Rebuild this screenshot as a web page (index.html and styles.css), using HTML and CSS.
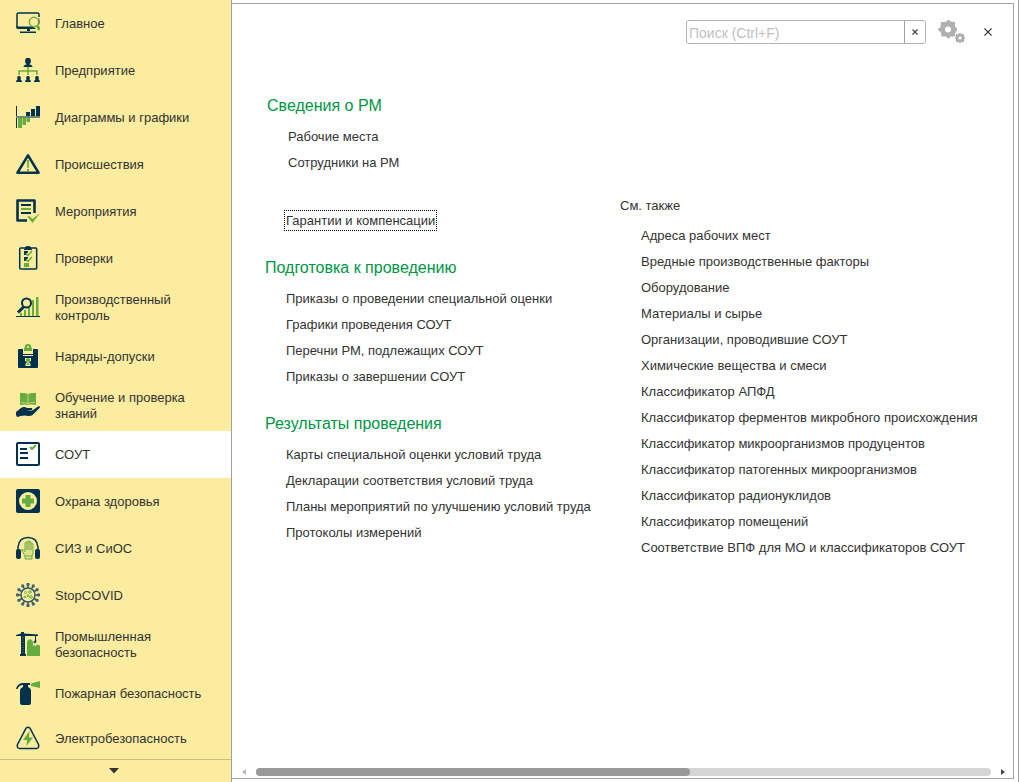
FILE: index.html
```html
<!DOCTYPE html>
<html lang="ru">
<head>
<meta charset="utf-8">
<title>СОУТ</title>
<link rel="stylesheet" href="styles.css">
</head>
<body>
<div class="app">
  <nav class="sidebar" aria-label="Разделы">
    <ul class="sections">
      <li><a class="section" href="#"><svg class="icon" viewBox="0 0 24 24"><path class="ns" d="M23 6V3.500Q23 2 21.500 2h-19Q1 2 1 3.500V16"/><path class="n" d="M0 15.500h17l3 2.500H2q-2 0-2-2zM11 18h3v2h-3zM4 20.500h16V22H4z"/><circle class="gs" cx="18" cy="11" r="4.700"/><path class="gs w3" d="M21.500 15l2 4"/><path d="M22.500 7.500q1.500 3 0 6" fill="none" stroke="#6d8878" stroke-width="1.500"/></svg><span>Главное</span></a></li>
      <li><a class="section" href="#"><svg class="icon" viewBox="0 0 24 24"><path class="gs" d="M12 9v8M3 17v-4h18v4"/><g class="n"><ellipse cx="12" cy="3" rx="2.900" ry="3.300"/><path d="M7.500 9q0-2 3-2.500V5h3v1.500q3 .5 3 2.500zM0 24q0-2 1.500-2.500-1.200-3.500 1.500-3.500t1.500 3.500Q6 22 6 24zM9 24q0-2 1.500-2.500-1.200-3.500 1.500-3.500t1.500 3.500Q15 22 15 24zM18 24q0-2 1.500-2.500-1.200-3.500 1.500-3.500t1.500 3.500Q24 22 24 24z"/></g></svg><span>Предприятие</span></a></li>
      <li><a class="section" href="#"><svg class="icon" viewBox="0 0 24 24"><path class="n" d="M0 1h1v22H0zM10 7h4v4h-4zM15 4h4v7h-4zM20 1h4v10h-4z"/><path fill="#6d8878" d="M0 11h24v2H0z"/><path class="g" d="M2 13h4v10H2zM6.500 13h3.500v7H6.500zM10.500 13h3.500v4h-3.500z"/></svg><span>Диаграммы и графики</span></a></li>
      <li><a class="section" href="#"><svg class="icon" viewBox="0 0 24 24"><path class="ns heavy" d="M12 3.300L22.500 20.700h-21z"/><path class="g" d="M11 8h2l-.3 8h-1.400zM11 17h2v2h-2z"/></svg><span>Происшествия</span></a></li>
      <li><a class="section" href="#"><svg class="icon" viewBox="0 0 24 24"><path class="ns heavy" d="M18.500 14V1.500h-17v20H11"/><path class="ns w2" d="M5 6h10M5 14h10"/><path class="gs w2" d="M5 10h10"/><path class="g" d="M11 17l3 .5 2.500 2.500 7.500-6-7.500 10z"/></svg><span>Мероприятия</span></a></li>
      <li><a class="section" href="#"><svg class="icon" viewBox="0 0 24 24"><rect class="ns" x="3.700" y="2" width="17" height="21" rx="1"/><path class="n" d="M9 1q3-2 6 0v2h1v1H8V3h1zM8 5h4v1L10 9H8zM8 11h4v1l-2 3H8z"/><path class="gs" d="M9.500 7.500l2.500 2L16 5M9.500 13.500l2.500 2 4-4.500"/><path class="g" d="M8 17h5v4H8z"/></svg><span>Проверки</span></a></li>
      <li><a class="section" href="#"><svg class="icon" viewBox="0 0 24 24"><path class="g" d="M4 18h2v3H4zM8 15h2v6H8zM12 13h2v8h-2zM16 5h2v16h-2zM20 2h2.500v19H20z"/><circle cx="10.500" cy="8" r="4.500" fill="#fbec9f" stroke="#00324d" stroke-width="2"/><path class="ns w3" d="M7.500 12L2 17.500"/><path class="n" d="M0 21h24v1H0z"/></svg><span>Производственный контроль</span></a></li>
      <li><a class="section" href="#"><svg class="icon" viewBox="0 0 24 24"><path class="n" d="M2 6q0-1 1-1h4v5h10V5h4q1 0 1 1v17q0 1-1 1H3q-1 0-1-1z"/><path fill="#fbec9f" d="M7 11h10v1H7zM9.500 22h5v-2l-1.500-2 2-1v-3H9v3l2 1-1.500 2z"/><path class="g" d="M8 7V4q1 0 1-2 0-2 3-2t3 2q0 2 1 2v3zM10 15q2-2 4 0v2l-1.500 1.500h-1L10 17zM10.500 20l1.500-1 1.500 1v1h-3z"/><circle cx="12" cy="3" r="1" fill="#fbec9f"/></svg><span>Наряды-допуски</span></a></li>
      <li><a class="section" href="#"><svg class="icon" viewBox="0 0 24 24"><path class="g" d="M4 0q5-.5 8 1 3-1.500 8-1v12q-5-1-8 0-3-1-8 0z"/><path d="M12 1v10M5 9.500q4-.5 7 1.500 3-2 7-1.500" fill="none" stroke="#d6da88" stroke-width=".8"/><path class="n" d="M0 19l5-4q3-2 6 0h5q1 2-2 2.500h-3q3 1 6-.5l5-3.500q3-1 1.500 1.500l-7 7q-2 1.500-8 .5-4 0-7 1.500-2-1-1.500-5z"/></svg><span>Обучение и проверка знаний</span></a></li>
      <li><a class="section selected" href="#" aria-current="page"><svg class="icon" viewBox="0 0 24 24"><rect class="ns w2" x="1" y="1" width="22" height="22" rx="1"/><path class="n" d="M4 6h7v2H4zM4 10h8v2H4zM4 15h8v2H4z"/><path class="gs w2" d="M14 5l2 2 4-4"/></svg><span>СОУТ</span></a></li>
      <li><a class="section" href="#"><svg class="icon" viewBox="0 0 24 24"><rect class="n" width="24" height="24" rx="2"/><circle cx="12" cy="12" r="9" fill="#fbec9f"/><path class="g" d="M9.500 6h5v3.500H18v5h-3.500V18h-5v-3.500H6v-5h3.500z"/></svg><span>Охрана здоровья</span></a></li>
      <li><a class="section" href="#"><svg class="icon" viewBox="0 0 24 24"><path class="ns" d="M2 14V11Q3 1.500 12 1.500T22 11v3"/><rect class="n" y="13" width="5" height="10" rx="2"/><rect class="n" x="19" y="13" width="5" height="10" rx="2"/><path d="M9 23v-3L5.500 14q0-2 3.500 1.500V7q1-1.500 2 0V5.500q1-1.500 2 0V6q1-1.500 2 0v2q2-1.500 2 0v9l-1 3v3zM11 7v7M13 6v8M15 8v6M9 20h7" fill="#e3df90" stroke="#67ac3f" stroke-width="1"/></svg><span>СИЗ и СиОС</span></a></li>
      <li><a class="section" href="#"><svg class="icon" viewBox="0 0 24 24"><g fill="none" stroke="#36596a" stroke-width="1.500"><circle cx="12" cy="12" r="7"/><path d="M12 5V2M15.500 6L17 3.300M18 8.500l2.700-1.500M19 12h3M18 15.500l2.700 1.500M15.500 18l1.500 2.700M12 19v3M8.500 18L7 20.700M6 15.500L3.300 17M5 12H2M6 8.500L3.300 7M8.500 6L7 3.300"/></g><g fill="none" stroke="#36596a" stroke-width="1.300"><circle cx="12" cy="1.500" r="1"/><circle cx="17.300" cy="2.900" r="1"/><circle cx="21.100" cy="6.700" r="1"/><circle cx="22.500" cy="12" r="1"/><circle cx="21.100" cy="17.300" r="1"/><circle cx="17.300" cy="21.100" r="1"/><circle cx="12" cy="22.500" r="1"/><circle cx="6.700" cy="21.100" r="1"/><circle cx="2.900" cy="17.300" r="1"/><circle cx="1.500" cy="12" r="1"/><circle cx="2.900" cy="6.700" r="1"/><circle cx="6.700" cy="2.900" r="1"/></g><g fill="none" stroke="#67ac3f" stroke-width="1"><circle cx="9.500" cy="9.500" r="1"/><circle cx="14" cy="9" r="1.300"/><circle cx="12" cy="12.500" r="1"/><circle cx="9" cy="14" r="1"/><circle cx="15" cy="14" r="1.300"/></g></svg><span>StopCOVID</span></a></li>
      <li><a class="section" href="#"><svg class="icon" viewBox="0 0 24 24"><path class="n" d="M0 3l5-1.500V0h3v1.500L22 2.500V4h-2v4h-1V4H9v18h1v2H4v-2h1V4H0z"/><path d="M7 5v17" stroke="#6d8878" stroke-dasharray="1 1.500"/><path class="ns" d="M19.500 8v2q-1 1-1.500-.5"/><path class="g" d="M11 24V10l1-2q2-1.500 4 0l1 2v4q2-2 2.500 1v-1q2.500-3 4.500 0v10z"/></svg><span>Промышленная безопасность</span></a></li>
      <li><a class="section" href="#"><svg class="icon" viewBox="0 0 24 24"><path class="n" d="M0 8q1-5 6-6h8v2h-2v2q3 1 3 4v12q0 2-2 2H6q-2 0-2-2V10q0-3 3-4V4Q3 4 1.500 8z"/><path class="g" d="M15 2.500L24 0v7l-9-2z"/></svg><span>Пожарная безопасность</span></a></li>
      <li><a class="section" href="#"><svg class="icon" viewBox="0 0 24 24"><path class="ns" d="M10 2.200q2-2 4 0l8.500 16.300q1 3.500-2 4h-17q-3-.5-2-4z"/><path class="g" d="M13.500 5L7 14h4l-.5 6 6.500-8.500h-4z"/></svg><span>Электробезопасность</span></a></li>
    </ul>
    <button class="more" type="button" aria-label="Ещё"><svg width="10" height="6" viewBox="0 0 10 6"><path d="M0 0h10L5 5.500z" fill="#333"/></svg></button>
  </nav>

  <div class="workspace">
    <main class="panel">
      <header class="toolbar">
        <div class="search">
          <input type="text" placeholder="Поиск (Ctrl+F)" aria-label="Поиск">
          <button type="button" aria-label="Очистить"><svg width="6" height="6" viewBox="0 0 6 6"><path d="M.5.5l5 5M5.500.5l-5 5" stroke="#444" stroke-width="1.200"/></svg></button>
        </div>
        <button class="settings" type="button" aria-label="Настройки"><svg width="27" height="24" viewBox="0 0 27 24"><path fill="#b0b0b0" fill-rule="evenodd" d="M7 2l1.500-.5L9.500 0h2l1 1.500L17 2v4.500l2 2v2l-1.500 1.500-.5 4.500h-4.500L11 18.500H9.500L8 16.500H3.500L3 12.500 0 10V9l2.500-2L3 2zM10 6.500a3 3 0 1 0 0 6 3 3 0 1 0 0-6zM20.500 14l1-1h1l1 1H26v2.500l1 1v1l-1 1V22h-2.500l-1 1h-1l-1-1H18v-2.500l-1-1v-1l1-1V14zM22 16.500a1.500 1.500 0 1 0 0 3 1.500 1.500 0 1 0 0-3z"/></svg></button>
        <button class="close" type="button" aria-label="Закрыть"><svg width="8" height="8" viewBox="0 0 8 8"><path d="M.4.4l7.200 7.200M7.600.4L.4 7.600" stroke="#333" stroke-width="1.200"/></svg></button>
      </header>

      <div class="columns">
        <div class="commands">
          <section class="group first">
            <h2>Сведения о РМ</h2>
            <ul class="links">
              <li><a href="#">Рабочие места</a></li>
              <li><a href="#">Сотрудники на РМ</a></li>
            </ul>
          </section>
          <ul class="links single">
            <li><a class="focused" href="#">Гарантии и компенсации</a></li>
          </ul>
          <section class="group">
            <h2>Подготовка к проведению</h2>
            <ul class="links">
              <li><a href="#">Приказы о проведении специальной оценки</a></li>
              <li><a href="#">Графики проведения СОУТ</a></li>
              <li><a href="#">Перечни РМ, подлежащих СОУТ</a></li>
              <li><a href="#">Приказы о завершении СОУТ</a></li>
            </ul>
          </section>
          <section class="group">
            <h2>Результаты проведения</h2>
            <ul class="links">
              <li><a href="#">Карты специальной оценки условий труда</a></li>
              <li><a href="#">Декларации соответствия условий труда</a></li>
              <li><a href="#">Планы мероприятий по улучшению условий труда</a></li>
              <li><a href="#">Протоколы измерений</a></li>
            </ul>
          </section>
        </div>
        <section class="see-also">
          <h3>См. также</h3>
          <ul class="links">
            <li><a href="#">Адреса рабочих мест</a></li>
            <li><a href="#">Вредные производственные факторы</a></li>
            <li><a href="#">Оборудование</a></li>
            <li><a href="#">Материалы и сырье</a></li>
            <li><a href="#">Организации, проводившие СОУТ</a></li>
            <li><a href="#">Химические вещества и смеси</a></li>
            <li><a href="#">Классификатор АПФД</a></li>
            <li><a href="#">Классификатор ферментов микробного происхождения</a></li>
            <li><a href="#">Классификатор микроорганизмов продуцентов</a></li>
            <li><a href="#">Классификатор патогенных микроорганизмов</a></li>
            <li><a href="#">Классификатор радионуклидов</a></li>
            <li><a href="#">Классификатор помещений</a></li>
            <li><a href="#">Соответствие ВПФ для МО и классификаторов СОУТ</a></li>
          </ul>
        </section>
      </div>

      <div class="scrollbar">
        <svg width="4" height="6" viewBox="0 0 4 6"><path d="M4 0v6L0 3z" fill="#b8b8b8"/></svg>
        <div class="track"><div class="thumb"></div></div>
        <svg width="4" height="6" viewBox="0 0 4 6"><path d="M0 0v6l4-3z" fill="#444"/></svg>
      </div>
    </main>
  </div>
</div>
</body>
</html>
```
FILE: styles.css
```css
* { box-sizing: border-box; }

body {
  margin: 0;
  background: #fff;
  color: #333;
  font: 13px/16px "Liberation Sans", Arial, sans-serif;
}

ul, h2, h3 { margin: 0; padding: 0; }
ul { list-style: none; }
a { color: inherit; text-decoration: none; }

button {
  display: flex;
  align-items: center;
  justify-content: center;
  padding: 0;
  border: 0;
  background: none;
}

.app { display: flex; height: 100vh; }

/* Sections list */
.sidebar {
  display: flex;
  flex-direction: column;
  flex: 0 0 232px;
  border-right: 1px solid #a0a0a0;
  background: #fbec9f;
}

.sections { flex: 1; min-height: 0; overflow: hidden; }

.section {
  display: flex;
  align-items: center;
  gap: 15px;
  min-height: 47px;
  padding: 8px 24px 9px 16px;
}

.section span { padding-top: 2px; }
.sections li:last-child .section { min-height: 42px; }
.selected { background: #fff; }
.icon { flex: none; width: 24px; height: 24px; }

.n { fill: #00324d; }
.g { fill: #67ac3f; }
.ns, .gs { fill: none; stroke: #00324d; stroke-width: 1.5; }
.gs { stroke: #67ac3f; }
.w2 { stroke-width: 2; stroke-linejoin: round; }
.heavy { stroke-width: 2.6; stroke-linejoin: round; }
.w3 { stroke-width: 3; }

.more {
  flex: 0 0 23px;
  padding-right: 3px;
  border-top: 1px solid #c9bd80;
}

/* Main panel */
.workspace {
  display: flex;
  flex: 1;
  min-width: 0;
  padding: 3px 4px 3px 0;
  border-right: 1px solid #a0a0a0;
}

.panel {
  display: flex;
  flex: 1;
  flex-direction: column;
  min-width: 0;
  border: 1px solid #a0a0a0;
  border-left: 0;
}

.toolbar {
  display: flex;
  align-items: center;
  justify-content: flex-end;
  padding: 16px 16px 0 0;
}

.search {
  display: flex;
  width: 240px;
  height: 24px;
  border: 1px solid #b3b3b3;
  border-radius: 3px;
}

.search input {
  flex: 1;
  min-width: 0;
  padding: 1px 2px 0;
  border: 0;
  outline: 0;
  background: none;
  font: 14px "Liberation Sans", Arial, sans-serif;
}

.search input::placeholder { color: #c0c0c0; opacity: 1; }
.search button { width: 21px; border-left: 1px solid #a0a0a0; }
.settings { margin-left: 12px; }
.close { width: 18px; height: 24px; margin-left: 14px; }

.columns {
  display: flex;
  flex: 1;
  min-height: 0;
  padding: 49px 0 0 33px;
  overflow: hidden;
  white-space: nowrap;
}

.commands { flex: 0 0 355px; }

.group { margin-bottom: 21px; }
.group.first { margin-bottom: 32px; padding-left: 2px; }

.group h2 {
  margin-bottom: 5px;
  color: #009646;
  font-size: 16px;
  font-weight: 400;
  line-height: 26px;
}

.links { padding-left: 21px; line-height: 26px; }
.single { margin-bottom: 21px; }

.focused {
  padding: 1px 0;
  outline: 1px dotted #000;
  outline-offset: 1px;
}

.see-also { padding-top: 100px; }

.see-also h3 {
  margin-bottom: 4px;
  font-size: 13px;
  font-weight: 400;
  line-height: 26px;
}

.scrollbar {
  display: flex;
  align-items: center;
  gap: 10px;
  padding: 0 8px 2px 10px;
}

.track {
  flex: 1;
  height: 8px;
  border-radius: 4px;
  background: #d5d5d5;
}

.thumb {
  width: 59%;
  height: 8px;
  border-radius: 4px;
  background: #999;
}
```
